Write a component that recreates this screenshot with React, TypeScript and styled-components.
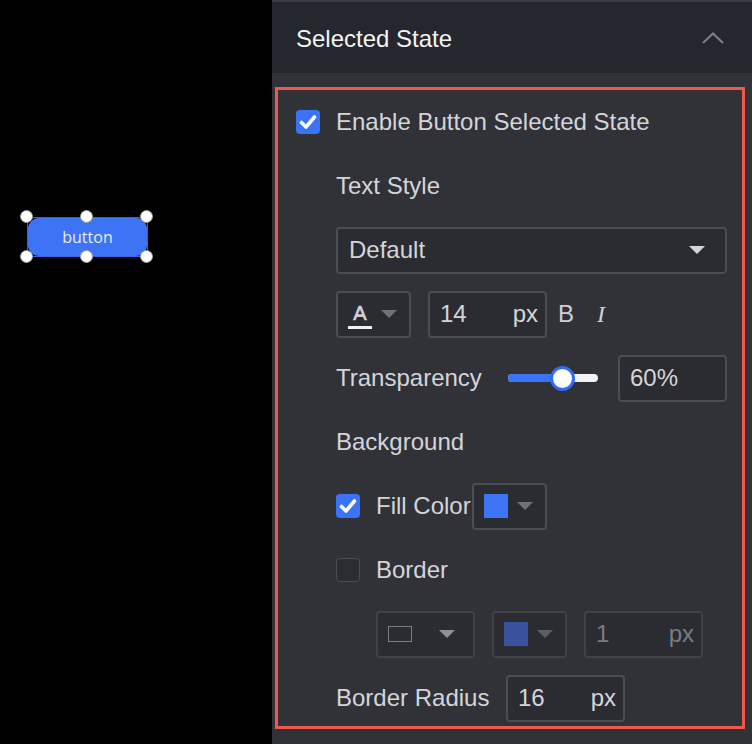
import React from "react";
import styled, { createGlobalStyle } from "styled-components";

const GlobalStyle = createGlobalStyle`
  html, body { margin: 0; padding: 0; background: #000; }
  body { font-family: "Liberation Sans", Arial, sans-serif; }
  * { box-sizing: border-box; }
`;

const Page = styled.div`
  display: flex;
  width: 752px;
  height: 744px;
  overflow: hidden;
`;

const Canvas = styled.div`
  position: relative;
  flex: 0 0 272px;
  height: 100%;
  background: #000;
`;

const Selection = styled.div`
  position: absolute;
  left: 27px;
  top: 217px;
  width: 121px;
  height: 40px;
  border: 1px solid #2f63e0;
`;

const CanvasButton = styled.div`
  width: 100%;
  height: 100%;
  border-radius: 11px;
  background: #3d74f5;
  color: #e8ecff;
  font-family: "Open Sans", "Liberation Sans", sans-serif;
  font-size: 16px;
  display: flex;
  align-items: center;
  justify-content: center;
`;

const Handle = styled.span<{ $x: string; $y: string }>`
  position: absolute;
  left: ${(p) => p.$x};
  top: ${(p) => p.$y};
  width: 13px;
  height: 13px;
  margin: -7px 0 0 -7px;
  border-radius: 50%;
  background: #fff;
  border: 1px solid #9a9a9a;
`;

const Panel = styled.div`
  flex: 1;
  display: flex;
  flex-direction: column;
  background: #303238;
  border-top: 2px solid #3b3d43;
`;

const Header = styled.div`
  height: 71px;
  flex: 0 0 71px;
  background: #25272e;
  display: flex;
  align-items: center;
  justify-content: space-between;
  padding: 0 28px 0 24px;
`;

const HeaderTitle = styled.div`
  color: #f4f4f6;
  font-size: 24px;
  margin-top: 2px;
`;

const Body = styled.div`
  padding: 14px 7px 0 3px;
`;

const Frame = styled.div`
  border: 3px solid #f2574c;
  height: 642px;
  padding: 9px 0 0 18px;
  display: flex;
  flex-direction: column;
  gap: 18px;
`;

const Row = styled.div<{ $indent?: number; $gap?: number }>`
  height: 46px;
  display: flex;
  align-items: center;
  gap: ${(p) => p.$gap ?? 0}px;
  padding-left: ${(p) => p.$indent ?? 0}px;
  color: #d5d5d9;
  font-size: 24px;
`;

const Label = styled.span<{ $dim?: boolean }>`
  color: ${(p) => (p.$dim ? "#7b7d83" : "#d5d5d9")};
  white-space: nowrap;
`;

const Box = styled.div<{ $checked?: boolean }>`
  width: 24px;
  height: 24px;
  flex: 0 0 24px;
  border-radius: 4px;
  background: ${(p) => (p.$checked ? "#3b73f6" : "#2b2d32")};
  border: ${(p) => (p.$checked ? "none" : "1.5px solid #4c4e55")};
  display: flex;
  align-items: center;
  justify-content: center;
  margin-right: 16px;
`;

const Field = styled.div<{ $w: number; $dim?: boolean }>`
  width: ${(p) => p.$w}px;
  height: 47px;
  flex: 0 0 auto;
  border: 2px solid ${(p) => (p.$dim ? "#404248" : "#4b4d53")};
  border-radius: 4px;
  background: #2a2c31;
  display: flex;
  align-items: center;
  justify-content: space-between;
  padding: 0 7px 0 10px;
  color: ${(p) => (p.$dim ? "#7a7c82" : "#d5d5d9")};
  font-size: 24px;
`;

const Unit = styled.span<{ $dim?: boolean }>`
  color: ${(p) => (p.$dim ? "#7a7c82" : "#d5d5d9")};
`;

const Caret = styled.span<{ $color: string }>`
  width: 0;
  height: 0;
  border-left: 8px solid transparent;
  border-right: 8px solid transparent;
  border-top: 8px solid ${(p) => p.$color};
`;

const Swatch = styled.span<{ $color: string }>`
  width: 24px;
  height: 24px;
  background: ${(p) => p.$color};
`;

const OutlineRect = styled.span`
  width: 24px;
  height: 16px;
  border: 1.5px solid #7c7e85;
`;

const FontColorA = styled.span`
  display: flex;
  flex-direction: column;
  align-items: center;
  font-size: 20px;
  line-height: 19px;
  color: #d5d5d9;
  -webkit-text-stroke: 0.6px #d5d5d9;
  margin-top: 4px;
  &::after {
    content: "";
    width: 24px;
    height: 3px;
    background: #f0f0f2;
    margin-top: 3px;
  }
`;

const StyleToggle = styled.span<{ $italic?: boolean }>`
  font-family: ${(p) => (p.$italic ? '"Liberation Serif", serif' : '"Liberation Sans", sans-serif')};
  font-style: ${(p) => (p.$italic ? "italic" : "normal")};
  font-size: 24px;
  color: #cfd0d4;
`;

const Track = styled.div`
  position: relative;
  width: 90px;
  height: 8px;
  border-radius: 4px;
  background: #f2f2f4;
`;

const Fill = styled.div`
  height: 100%;
  border-radius: 4px;
  background: #3b73f6;
`;

const Thumb = styled.div`
  position: absolute;
  top: 50%;
  width: 25px;
  height: 25px;
  margin: -12.5px 0 0 -12.5px;
  border-radius: 50%;
  background: #fff;
  border: 3.5px solid #2f6cf5;
`;

const Check = () => (
  <svg width="18" height="16" viewBox="0 0 18 16">
    <polyline points="2.5,8.5 7,13 15.5,3" fill="none" stroke="#fff" strokeWidth="3.6" strokeLinecap="round" strokeLinejoin="round" />
  </svg>
);

const ChevronUp = () => (
  <svg width="22" height="12" viewBox="0 0 22 12">
    <polyline points="1,11 11,1.5 21,11" fill="none" stroke="#7e8087" strokeWidth="2" />
  </svg>
);

export default function App() {
  const value = 60;
  return (
    <>
      <GlobalStyle />
      <Page>
        <Canvas>
          <Selection>
            <CanvasButton>button</CanvasButton>
          </Selection>
          <Handle $x="27px" $y="217px" />
          <Handle $x="87px" $y="217px" />
          <Handle $x="147px" $y="217px" />
          <Handle $x="27px" $y="257px" />
          <Handle $x="87px" $y="257px" />
          <Handle $x="147px" $y="257px" />
        </Canvas>
        <Panel>
          <Header>
            <HeaderTitle>Selected State</HeaderTitle>
            <ChevronUp />
          </Header>
          <Body>
            <Frame>
              <Row>
                <Box $checked><Check /></Box>
                <Label>Enable Button Selected State</Label>
              </Row>
              <Row $indent={40}>
                <Label>Text Style</Label>
              </Row>
              <Row $indent={40}>
                <Field $w={391} style={{ paddingLeft: 11, paddingRight: 20 }}>
                  <span>Default</span>
                  <Caret $color="#d5d5d9" />
                </Field>
              </Row>
              <Row $indent={40}>
                <Field $w={75} style={{ marginRight: 17, paddingLeft: 10, paddingRight: 12 }}>
                  <FontColorA>A</FontColorA>
                  <Caret $color="#6f717a" />
                </Field>
                <Field $w={119} style={{ marginRight: 11 }}>
                  <span>14</span>
                  <Unit>px</Unit>
                </Field>
                <StyleToggle style={{ marginRight: 23 }}>B</StyleToggle>
                <StyleToggle $italic>I</StyleToggle>
              </Row>
              <Row $indent={40}>
                <Label style={{ width: 172, flex: "0 0 172px" }}>Transparency</Label>
                <Track style={{ marginRight: 20 }}>
                  <Fill style={{ width: `${value}%` }} />
                  <Thumb style={{ left: `${value}%` }} />
                </Track>
                <Field $w={109}>
                  <span>60%</span>
                </Field>
              </Row>
              <Row $indent={40}>
                <Label>Background</Label>
              </Row>
              <Row $indent={40}>
                <Box $checked><Check /></Box>
                <Label style={{ width: 96, flex: "0 0 96px" }}>Fill Color</Label>
                <Field $w={75} style={{ paddingRight: 12 }}>
                  <Swatch $color="#3d74f5" />
                  <Caret $color="#6f717a" />
                </Field>
              </Row>
              <Row $indent={40}>
                <Box />
                <Label>Border</Label>
              </Row>
              <Row $indent={80} $gap={17}>
                <Field $w={99} $dim style={{ paddingLeft: 10, paddingRight: 18 }}>
                  <OutlineRect />
                  <Caret $color="#8e9096" />
                </Field>
                <Field $w={75} $dim style={{ paddingRight: 12 }}>
                  <Swatch $color="#3a529e" />
                  <Caret $color="#5d5f66" />
                </Field>
                <Field $w={119} $dim>
                  <span>1</span>
                  <Unit $dim>px</Unit>
                </Field>
              </Row>
              <Row $indent={40}>
                <Label style={{ width: 170, flex: "0 0 170px" }}>Border Radius</Label>
                <Field $w={119}>
                  <span>16</span>
                  <Unit>px</Unit>
                </Field>
              </Row>
            </Frame>
          </Body>
        </Panel>
      </Page>
    </>
  );
}
